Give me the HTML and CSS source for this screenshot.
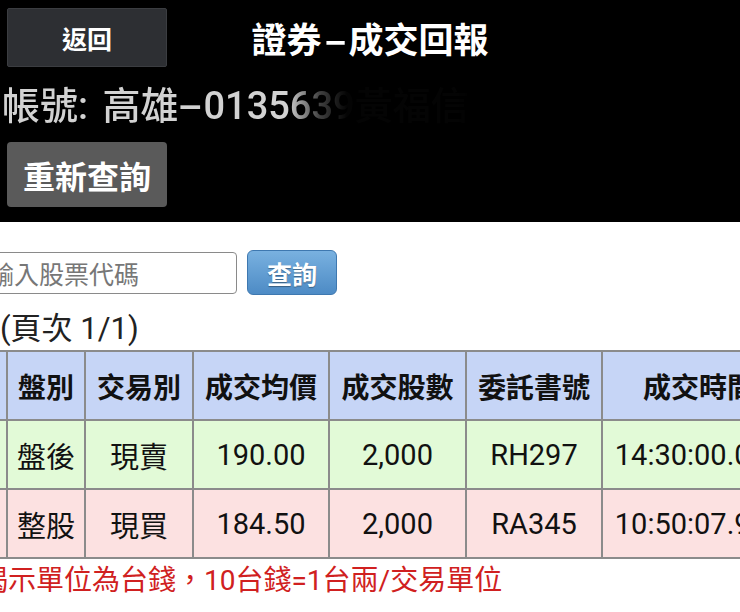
FILE: index.html
```html
<!DOCTYPE html>
<html lang="zh-Hant">
<head>
<meta charset="utf-8">
<title>證券-成交回報</title>
<link rel="stylesheet" href="styles.css">
</head>
<body>
<div class="page">
  <header class="header">
    <div class="topbar">
      <div class="topbar-left"><button class="btn-back">返回</button></div>
      <h1 class="title">證券<span class="dash">-</span>成交回報</h1>
      <div class="topbar-right"></div>
    </div>
    <div class="account">帳號: 高雄<span class="dash">-</span>0135639黃福信</div>
    <button class="btn-requery">重新查詢</button>
  </header>
  <main class="content">
    <div class="search">
      <input class="stock-input" type="text" placeholder="輸入股票代碼">
      <button class="btn-query">查詢</button>
    </div>
    <div class="pageinfo">(頁次 1/1)</div>
    <table class="trades">
      <colgroup>
        <col class="c0"><col class="c1"><col class="c2"><col class="c3"><col class="c4"><col class="c5"><col class="c6">
      </colgroup>
      <thead>
        <tr><th></th><th>盤別</th><th>交易別</th><th>成交均價</th><th>成交股數</th><th>委託書號</th><th>成交時間</th></tr>
      </thead>
      <tbody>
        <tr class="sell"><td></td><td>盤後</td><td>現賣</td><td>190.00</td><td>2,000</td><td>RH297</td><td>14:30:00.000</td></tr>
        <tr class="buy"><td></td><td>整股</td><td>現買</td><td>184.50</td><td>2,000</td><td>RA345</td><td>10:50:07.900</td></tr>
      </tbody>
    </table>
    <p class="note">揭示單位為台錢，10台錢=1台兩/交易單位</p>
  </main>
</div>
</body>
</html>
```
FILE: styles.css
```css
html, body {
  margin: 0;
  padding: 0;
  overflow: hidden;
  background: #fff;
}
body {
  width: 740px;
  height: 612px;
  font-family: Roboto, "Noto Sans CJK TC", sans-serif;
  color: #111;
}
.header {
  background: #000;
  height: 222px;
  box-sizing: border-box;
  padding: 8px 7px 0;
}
.topbar {
  display: grid;
  grid-template-columns: 1fr auto 1fr;
  align-items: center;
}
.btn-back {
  display: block;
  width: 160px;
  height: 59px;
  background: #2d2f33;
  border: 1px solid #3b3d41;
  border-radius: 2px;
  color: #fff;
  font-family: "Noto Sans CJK TC", sans-serif;
  font-size: 25px;
  font-weight: 700;
  padding: 0;
}
.title {
  margin: 0;
  color: #fff;
  font-family: "Noto Sans CJK TC", sans-serif;
  font-size: 35px;
  font-weight: 700;
  line-height: 44px;
  white-space: nowrap;
}
.dash {
  display: inline-block;
  width: 27px;
  text-align: center;
  transform: scaleX(1.9);
}
.account {
  margin: 17px 0 0 -5px;
  font-size: 38px;
  line-height: 44px;
  font-weight: 500;
  color: #d2d2d2;
  white-space: nowrap;
  word-spacing: 5px;
  -webkit-mask-image: linear-gradient(to right, #000 0, #000 285px, rgba(0,0,0,0.3) 318px, rgba(0,0,0,0.02) 345px, rgba(0,0,0,0.02) 455px, transparent 480px);
  mask-image: linear-gradient(to right, #000 0, #000 285px, rgba(0,0,0,0.3) 318px, rgba(0,0,0,0.02) 345px, rgba(0,0,0,0.02) 455px, transparent 480px);
}
.account .dash {
  width: 25px;
  transform: scaleX(2);
}
.btn-requery {
  display: block;
  margin-top: 14px;
  width: 160px;
  height: 65px;
  padding: 0;
  background: #5a5a5a;
  border: none;
  border-radius: 4px;
  color: #fff;
  font-family: "Noto Sans CJK TC", sans-serif;
  font-size: 32px;
  font-weight: 700;
}
.content {
  padding-top: 28px;
}
.search {
  display: flex;
  align-items: center;
  gap: 10px;
}
.stock-input {
  margin-left: -17px;
  width: 254px;
  height: 42px;
  box-sizing: border-box;
  border: 1.5px solid #8a8a8a;
  border-radius: 4px;
  padding: 0 0 0 5px;
  font-family: "Noto Sans CJK TC", sans-serif;
  font-size: 25px;
  color: #222;
  background: #fff;
}
.stock-input::placeholder {
  color: #777;
}
.btn-query {
  width: 90px;
  height: 45px;
  padding: 0;
  border: 1px solid #3e78b0;
  border-radius: 6px;
  background: linear-gradient(#79b1e0, #4d8bc5);
  color: #fff;
  font-family: "Noto Sans CJK TC", sans-serif;
  font-size: 25px;
  font-weight: 700;
  text-shadow: 0 1px 1px rgba(0,0,0,0.35);
}
.pageinfo {
  margin: 16px 0 0 0;
  font-size: 31px;
  line-height: 36px;
  color: #222;
  white-space: nowrap;
}
.trades {
  margin: 3px 0 0 -54px;
  border-collapse: collapse;
  table-layout: fixed;
  width: 849px;
}
.c0 { width: 60px; }
.c1 { width: 78px; }
.c2 { width: 108px; }
.c3 { width: 136px; }
.c4 { width: 137px; }
.c5 { width: 136px; }
.c6 { width: 194px; }
.trades th,
.trades td {
  border: 2px solid #8b8b8b;
  height: 67px;
  padding: 0;
  text-align: center;
  white-space: nowrap;
  overflow: hidden;
  color: #111;
}
.trades th {
  background: #c6d5f6;
  font-size: 28px;
  font-weight: 700;
}
.trades td {
  font-size: 29px;
  font-weight: 400;
}
.sell td { background: #e2fad7; }
.buy td { background: #fce1e1; }
.note {
  margin: 4px 0 0 -20px;
  font-size: 28px;
  line-height: 36px;
  color: #d02020;
  white-space: nowrap;
}
```
